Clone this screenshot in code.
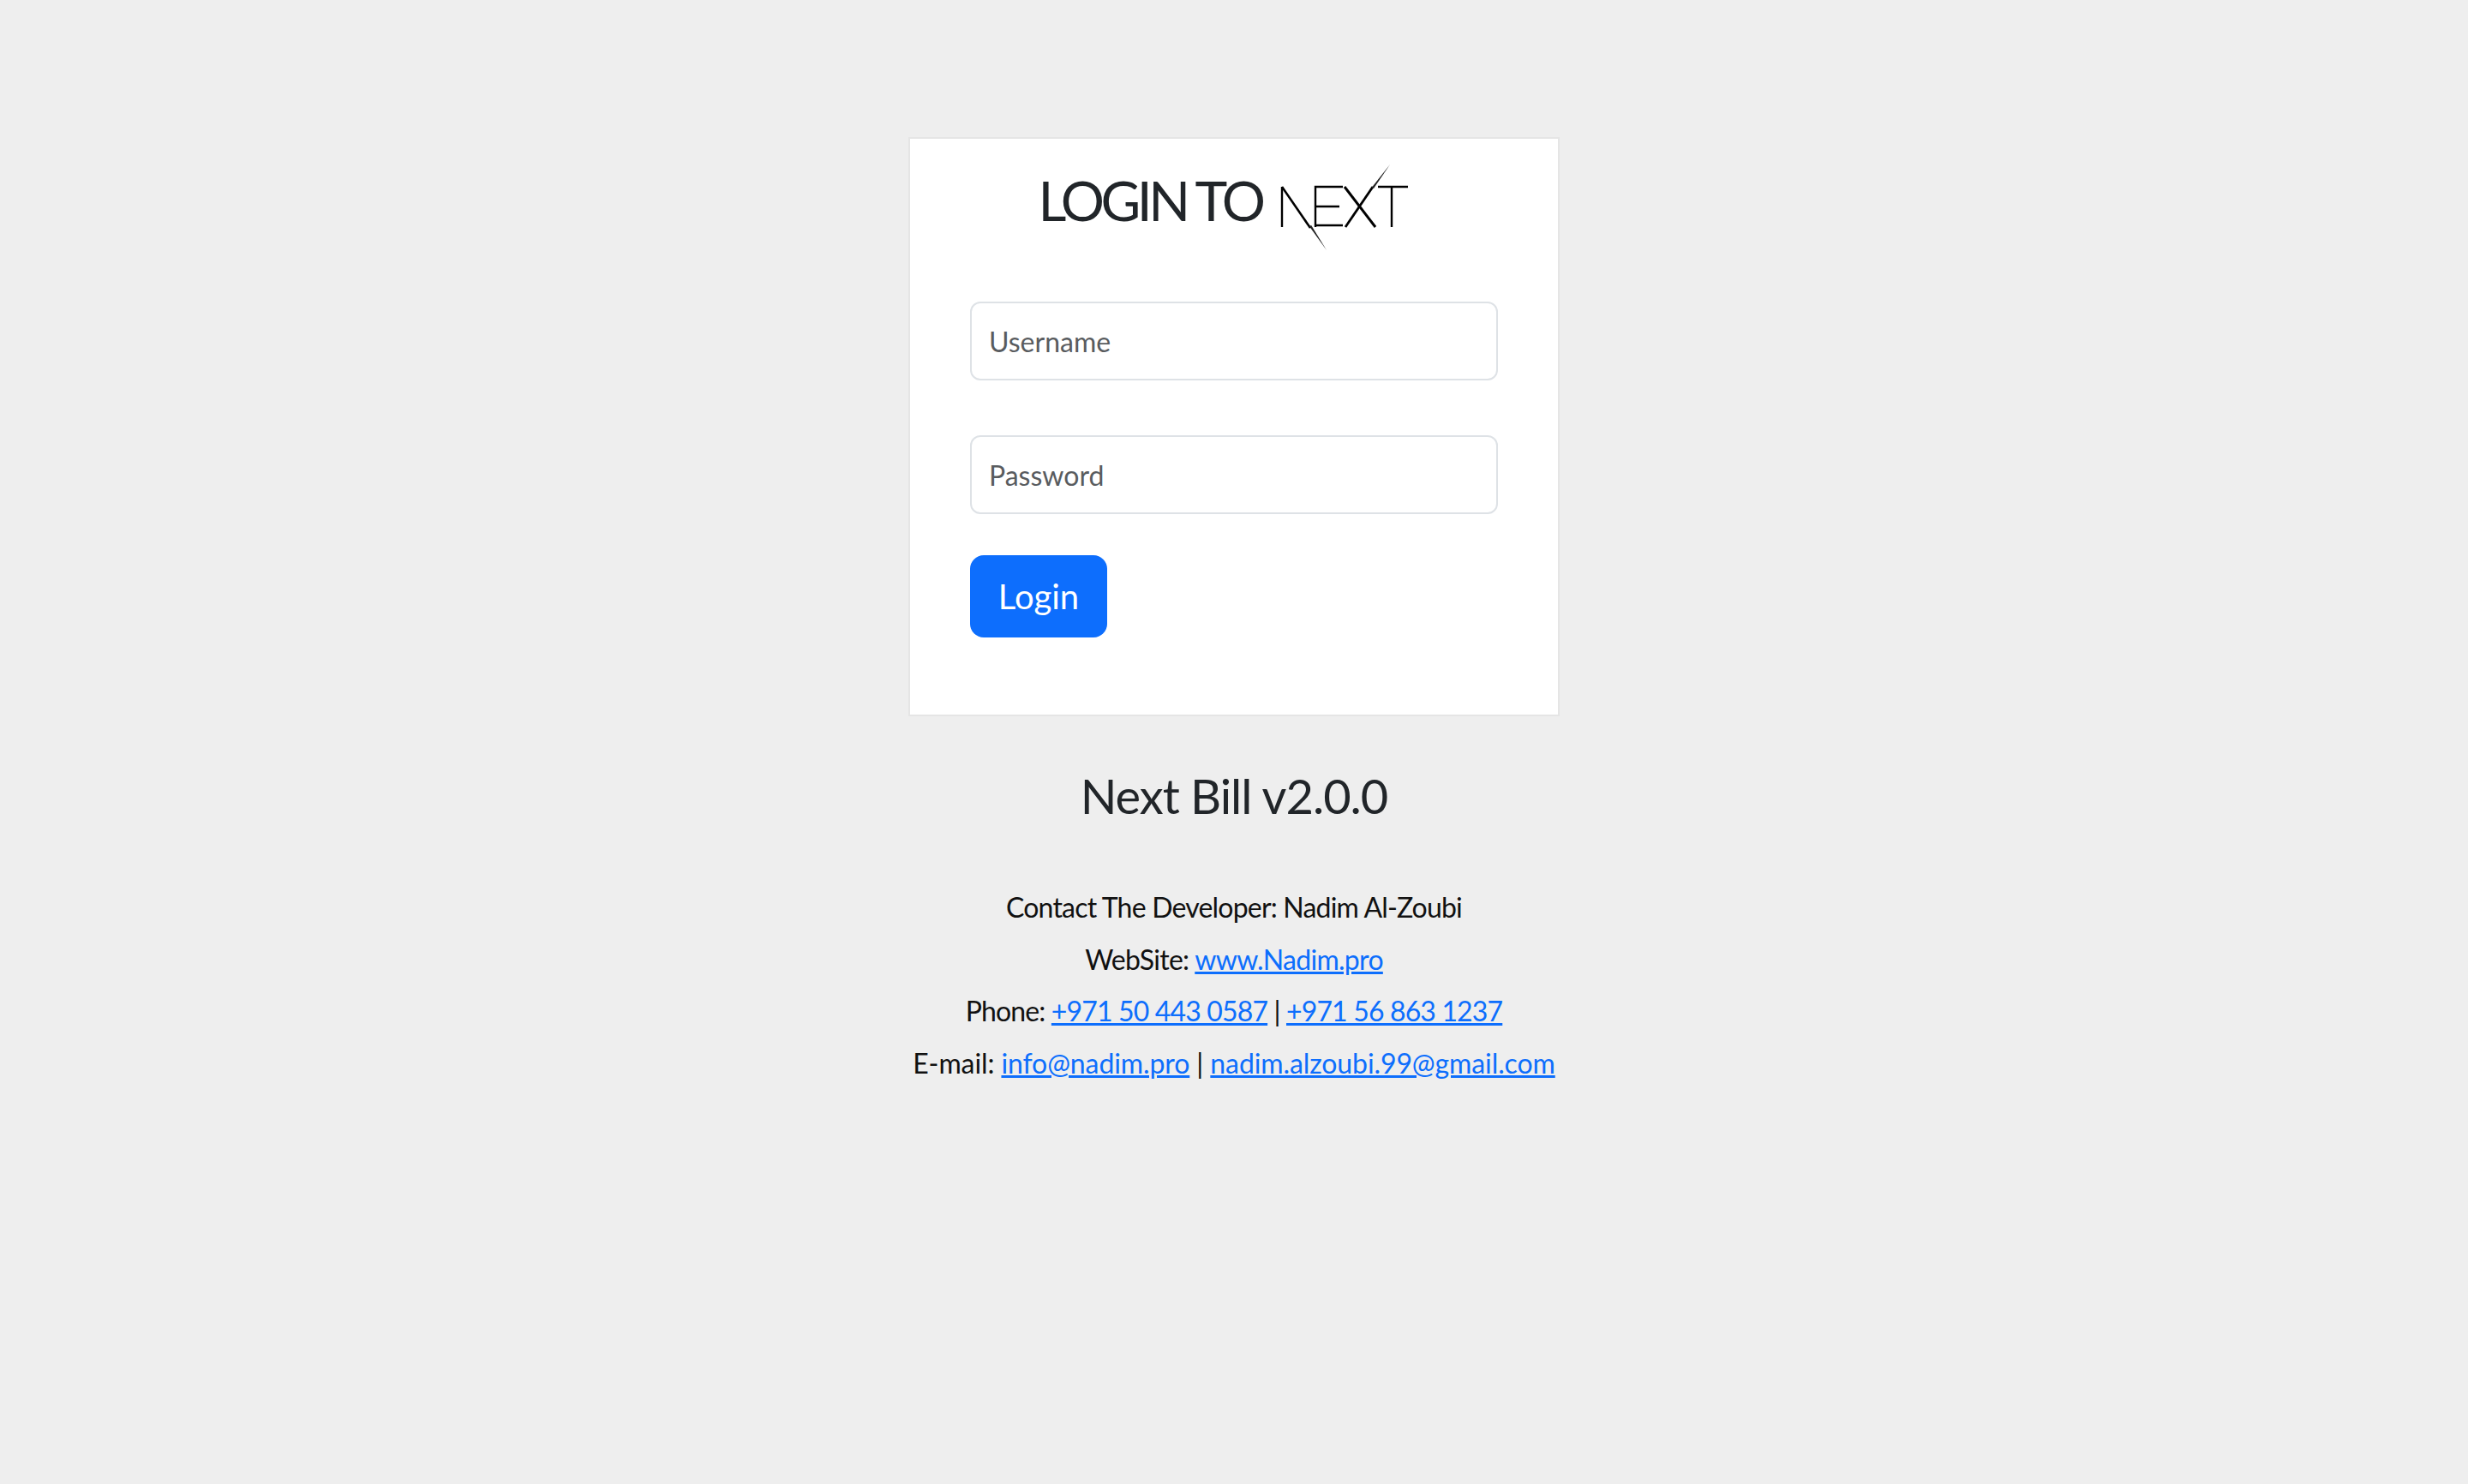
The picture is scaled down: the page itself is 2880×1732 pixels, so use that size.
<script>
    const phones = ["+971 50 443 0587", "+971 56 863 1237"];
    const emails = ["info@nadim.pro", "nadim.alzoubi.99@gmail.com"];
</script>

<div class="page">
    <main class="card">
        <h2 class="title">
            LOGIN TO
            <svg class="logo" viewBox="0 0 184 120" width="184" height="120" role="img" aria-label="Next">
                <g fill="none" stroke="#000" stroke-width="2.4">
                    <path d="M12 32V79" />
                    <path d="M12 32 L45 80" stroke-width="2.6" />
                    <path d="M51 79V32H83M51 55H79M51 77H83" />
                    <path d="M85 32L121 79" stroke-width="3" />
                    <path d="M124 32H159M140 32V79" />
                    <path d="M86 79L118 32" stroke-width="2.8" />
                </g>
                <polygon points="43.8,78 46.2,77 64,106" fill="#222" />
                <polygon points="116.6,33 119,34 138,6" fill="#222" />
            </svg>
        </h2>
        <form class="form" on:submit|preventDefault>
            <input class="field" type="text" placeholder="Username" />
            <input class="field" type="password" placeholder="Password" />
            <button class="btn" type="submit">Login</button>
        </form>
    </main>

    <h3 class="version">Next Bill v2.0.0</h3>

    <div class="contact">
        <p class="dev">Contact The Developer: Nadim Al-Zoubi</p>
        <p class="site">WebSite: <a href="#site">www.Nadim.pro</a></p>
        <p class="phone">
            Phone: <a href="#tel">{phones[0]}</a> | <a href="#tel">{phones[1]}</a>
        </p>
        <p class="mail">
            E-mail: <a href="#mail">{emails[0]}</a> | <a href="#mail">{emails[1]}</a>
        </p>
    </div>
</div>

<style>
    :global(body) {
        margin: 0;
        background: #eeeeee;
        color: #212529;
        font-family: Lato, "Liberation Sans", sans-serif;
        font-size: 32px;
        line-height: 1.5;
    }

    .page {
        min-height: 1732px;
        padding-top: 160px;
        box-sizing: border-box;
    }

    .card {
        width: 760px;
        box-sizing: border-box;
        margin: 0 auto;
        padding: 24px 70px 90px;
        background: #fff;
        border: 2px solid #e5e5e5;
    }

    .title {
        height: 166px;
        margin: 0;
        font-size: 64px;
        font-weight: 400;
        letter-spacing: -4.5px;
        line-height: 96px;
        text-align: center;
        white-space: nowrap;
    }

    .logo {
        display: inline-block;
        vertical-align: top;
    }

    .form {
        display: flex;
        flex-direction: column;
        align-items: flex-start;
    }

    .field {
        width: 100%;
        height: 92px;
        box-sizing: border-box;
        margin-bottom: 64px;
        padding: 0 20px;
        background: #fff;
        border: 2px solid #dee2e6;
        border-radius: 12px;
        color: #212529;
        font: inherit;
    }

    .field:nth-of-type(2) {
        margin-bottom: 48px;
    }

    .field::placeholder {
        color: #595c5f;
        opacity: 1;
    }

    .btn {
        width: 160px;
        height: 96px;
        padding: 0;
        background: #0d6efd;
        border: none;
        border-radius: 16px;
        color: #fff;
        font: inherit;
        font-size: 40px;
    }

    .version {
        margin: 59px 0 0;
        font-size: 56px;
        font-weight: 400;
        letter-spacing: -1px;
        line-height: 1.2;
        text-align: center;
    }

    .contact {
        margin-top: 73px;
        text-align: center;
    }

    .contact p {
        margin: 0 0 12.6px;
        color: #111;
    }

    /* Lato runs wider than the original face on some lines */
    .dev {
        letter-spacing: -0.8px;
    }

    .site {
        letter-spacing: -0.7px;
    }

    .phone {
        letter-spacing: -0.85px;
    }

    .mail {
        letter-spacing: -0.1px;
    }

    a {
        color: #0d6efd;
    }
</style>
